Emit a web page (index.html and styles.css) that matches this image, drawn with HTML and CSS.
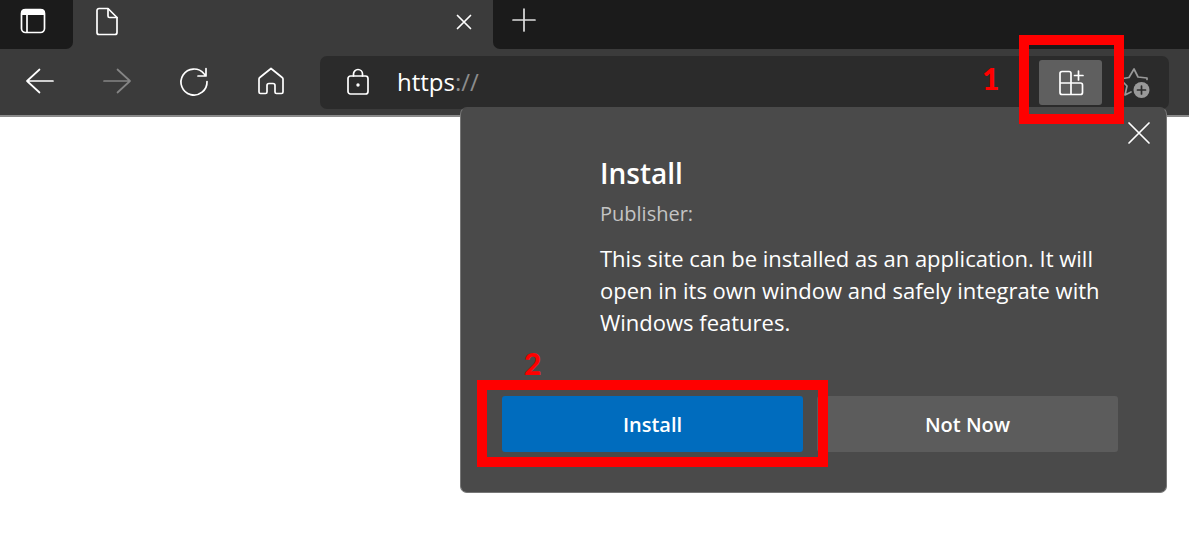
FILE: index.html
```html
<!DOCTYPE html>
<html lang="en">
<head>
<meta charset="utf-8">
<title>Install site as an application</title>
<link rel="stylesheet" href="styles.css">
</head>
<body>
<div class="browser">
  <header class="chrome">
    <div class="tab-strip">
      <button class="tab-actions" aria-label="Tab actions">
        <svg class="icon" width="26" height="26" viewBox="0 0 26 26"><rect x="1.5" y="1.5" width="23" height="23" rx="4"/><path class="solid" d="M1 7V5a4 4 0 0 1 4-4h16a4 4 0 0 1 4 4v2z"/><path d="M7 7v17"/></svg>
      </button>
      <div class="tab">
        <svg class="icon" width="24" height="30" viewBox="0 0 24 30"><path d="M4 1.500h9l9 9v15a2 2 0 0 1-2 2H4a2 2 0 0 1-2-2V3.500a2 2 0 0 1 2-2z"/><path d="M13 2v7a1.500 1.500 0 0 0 1.500 1.500H22"/></svg>
        <button class="tab-close" aria-label="Close tab">
          <svg class="icon" width="16" height="16" viewBox="0 0 16 16"><path d="M1.500 1.500l13 13M14.500 1.500l-13 13"/></svg>
        </button>
      </div>
      <div class="strip-rest">
        <button class="new-tab" aria-label="New tab">
          <svg class="icon" width="26" height="26" viewBox="0 0 26 26"><path d="M13 2v22M2 13h22"/></svg>
        </button>
      </div>
    </div>
    <div class="toolbar">
      <nav class="nav">
        <button aria-label="Back"><svg class="icon" width="30" height="30" viewBox="0 0 30 30"><path d="M14.500 3.500L2 15l12.500 11.500M2 15h26"/></svg></button>
        <button class="disabled" aria-label="Forward" disabled><svg class="icon" width="30" height="30" viewBox="0 0 30 30"><path d="M15.500 3.500L28 15 15.500 26.500M28 15H2"/></svg></button>
        <button aria-label="Refresh"><svg class="icon" width="30" height="30" viewBox="0 0 30 30"><path d="M28 15.500a13 13 0 1 1-3-7.800l1.800 2M27 2.500v7.500h-8"/></svg></button>
        <button aria-label="Home"><svg class="icon" width="30" height="30" viewBox="0 0 30 30"><path d="M15 2.500L3.800 11.500a2 2 0 0 0-.8 1.600V26a1.500 1.500 0 0 0 1.500 1.500h5A1.500 1.500 0 0 0 11 26v-6.500a2 2 0 0 1 2-2h4a2 2 0 0 1 2 2V26a1.500 1.500 0 0 0 1.500 1.500h5A1.500 1.500 0 0 0 27 26V13.100a2 2 0 0 0-.8-1.600z"/></svg></button>
      </nav>
      <div class="address">
        <svg class="icon" width="24" height="30" viewBox="0 0 24 30"><rect x="2" y="8" width="20" height="18" rx="2.500"/><path d="M7.500 8V6a4.500 4.500 0 0 1 9 0v2"/><circle class="dot" cx="12" cy="17" r="1.700"/></svg>
        <div class="url" role="textbox" aria-label="Address">https<span class="dim">://</span></div>
        <div class="app-slot">
          <button class="app-button" aria-label="App available">
            <svg class="icon" width="28" height="28" viewBox="0 0 28 28"><path d="M5 2.500h7a2 2 0 0 1 2 2V14h9.500a2 2 0 0 1 2 2v7.500a2 2 0 0 1-2 2H5a2 2 0 0 1-2-2v-19a2 2 0 0 1 2-2zM3 14h11v11.500M21.500 2v9M17.500 6.500h8.500"/></svg>
          </button>
          <span class="callout callout-app"></span>
          <strong class="step step-one">1</strong>
        </div>
        <button class="favorite" aria-label="Add to favorites">
          <svg class="icon" width="34" height="32" viewBox="0 0 34 32"><path d="M30 12.500v-1.500L21 10 17 2 12 10.500 3 12l7 7-2 9 6-3"/><circle class="badge" cx="24.500" cy="23" r="8"/><path class="badge-plus" d="M24.500 19v8M20.500 23h8"/></svg>
        </button>
      </div>
      <section class="popup" role="dialog" aria-labelledby="install-title">
        <button class="popup-close" aria-label="Close">
          <svg class="icon" width="22" height="22" viewBox="0 0 22 22"><path d="M1 1l20 20M21 1L1 21"/></svg>
        </button>
        <div class="details">
          <h1 id="install-title">Install</h1>
          <p class="publisher">Publisher:</p>
          <p class="description">This site can be installed as an application. It will open in its own window and safely integrate with Windows features.</p>
        </div>
        <div class="actions">
          <div class="install-slot">
            <button class="action primary">Install</button>
            <span class="callout callout-install"></span>
            <strong class="step step-two">2</strong>
          </div>
          <button class="action">Not Now</button>
        </div>
      </section>
    </div>
  </header>
</div>
</body>
</html>
```

FILE: styles.css
```css
* {
  box-sizing: border-box;
}

body {
  margin: 0;
  background: #fff;
  color: #fff;
  font-family: "Open Sans", "Noto Sans", sans-serif;
}

.browser {
  min-height: 100vh;
}

button {
  display: flex;
  align-items: center;
  justify-content: center;
  padding: 0;
  border: 0;
  background: none;
  color: inherit;
  font: inherit;
}

.icon {
  display: block;
  flex: none;
  overflow: visible;
  fill: none;
  stroke: currentColor;
  stroke-width: 1.7;
  stroke-linecap: round;
  stroke-linejoin: round;
}

.icon .solid,
.icon .dot {
  fill: currentColor;
  stroke: none;
}

.chrome {
  background: #3b3b3b;
}

.tab-strip {
  display: flex;
  height: 49px;
}

.tab-actions {
  width: 73px;
  padding: 0 7px 7px 0;
  background: #1b1b1b;
  border-radius: 0 0 7px 0;
}

.tab {
  display: flex;
  flex: 0 1 420px;
  align-items: center;
  justify-content: space-between;
  padding: 0 21px 6px 22px;
}

.strip-rest {
  display: flex;
  flex: 1;
  align-items: center;
  padding: 0 18px 9px;
  background: #1b1b1b;
  border-radius: 0 0 0 7px;
}

.new-tab {
  color: #ddd;
}

.toolbar {
  position: relative;
  display: flex;
  gap: 34px;
  padding: 7px 20px 6px 25px;
  border-bottom: 2px solid #8a8a8a;
}

.nav {
  display: flex;
  align-items: center;
  gap: 47px;
  padding-bottom: 3px;
}

.disabled {
  color: #858585;
}

.address {
  display: flex;
  flex: 1;
  align-items: center;
  height: 53px;
  padding: 0 18px 0 26px;
  background: #2b2b2b;
  border-radius: 7px;
}

.url {
  flex: 1;
  padding: 0 0 2px 27px;
  font-size: 24px;
  line-height: 32px;
}

.dim {
  color: #8c8c8c;
}

.app-slot {
  position: relative;
}

.app-button {
  width: 63px;
  height: 45px;
  background: #5f5f5f;
  border-radius: 3px;
}

.favorite {
  margin-left: 15px;
  color: #999;
}

.icon .badge {
  fill: #999;
  stroke: none;
}

.icon .badge-plus {
  stroke: #2b2b2b;
}

.callout {
  position: absolute;
  z-index: 3;
  border: 10px solid #f00;
  pointer-events: none;
}

.callout-app {
  inset: -25px -22px -19px -20px;
}

.callout-install {
  inset: -16px -25px -15px;
}

.step {
  position: absolute;
  color: #f00;
  font-family: Lato, sans-serif;
  font-size: 30px;
  font-weight: 900;
  line-height: 36px;
}

.step-one {
  top: 0;
  left: -57px;
}

.step-two {
  top: -51px;
  left: 22px;
}

.popup {
  position: absolute;
  z-index: 2;
  top: 58px;
  right: 22px;
  width: 707px;
  padding: 46px 48px 40px 41px;
  background: #4a4a4a;
  border: 1px solid #777;
  border-top-color: #4a4a4a;
  border-radius: 7px;
}

.popup-close {
  position: absolute;
  top: 14px;
  right: 16px;
}

.details {
  padding-left: 98px;
}

h1,
p {
  margin: 0;
}

h1 {
  font-size: 28px;
  font-weight: 600;
  line-height: 38px;
}

.publisher {
  margin-top: 8px;
  color: #c4c4c4;
  font-size: 20px;
  line-height: 28px;
}

.description {
  margin-top: 14px;
  font-size: 22px;
  line-height: 32px;
}

.actions {
  display: grid;
  grid-template-columns: 1fr 1fr;
  gap: 14px;
  margin-top: 58px;
}

.install-slot {
  position: relative;
}

.action {
  width: 100%;
  height: 56px;
  background: #5c5c5c;
  border-radius: 3px;
  font-size: 20px;
  font-weight: 600;
}

.primary {
  background: #006cbe;
}
```
